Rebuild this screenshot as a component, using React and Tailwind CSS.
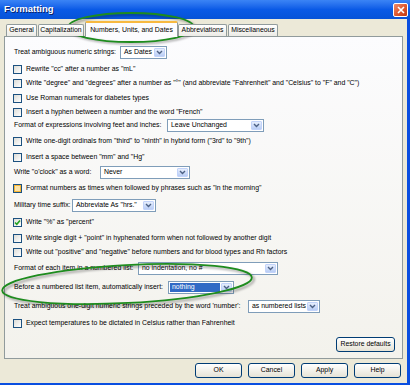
import React from 'react';

// Windows XP style "Formatting" dialog

const rows = [
  { kind: 'select', label: 'Treat ambiguous numeric strings:', lw: 'w-[106px]', value: 'As Dates', sw: 'w-[47px]', mt: 'mt-[9px]' },
  { kind: 'check', label: 'Rewrite "cc" after a number as "mL"', mt: 'mt-[5px]' },
  { kind: 'check', label: 'Write "degree" and "degrees" after a number as "°" (and abbreviate "Fahrenheit" and "Celsius" to "F" and "C")', mt: 'mt-[2px]' },
  { kind: 'check', label: 'Use Roman numerals for diabetes types', mt: 'mt-[3px]' },
  { kind: 'check', label: 'Insert a hyphen between a number and the word "French"', mt: 'mt-[2px]' },
  { kind: 'select', label: 'Format of expressions involving feet and inches:', lw: 'w-[153px]', value: 'Leave Unchanged', sw: 'w-[97px]', mt: 'mt-[1px]' },
  { kind: 'check', label: 'Write one-digit ordinals from "third" to "ninth" in hybrid form ("3rd" to "9th")', mt: 'mt-[4px]' },
  { kind: 'check', label: 'Insert a space between "mm" and "Hg"', mt: 'mt-[4px]' },
  { kind: 'select', label: 'Write "o\'clock" as a word:', lw: 'w-[86px]', value: 'Never', sw: 'w-[90px]', mt: 'mt-[3px]' },
  { kind: 'check', label: 'Format numbers as times when followed by phrases such as "in the morning"', hover: true, mt: 'mt-[4px]' },
  { kind: 'select', label: 'Military time suffix:', lw: 'w-[58px]', value: 'Abbreviate As "hrs."', sw: 'w-[84px]', mt: 'mt-[5px]' },
  { kind: 'check', label: 'Write "%" as "percent"', checked: true, mt: 'mt-[5px]' },
  { kind: 'check', label: 'Write single digit + "point" in hyphenated form when not followed by another digit', mt: 'mt-[4px]' },
  { kind: 'check', label: 'Write out "positive" and "negative" before numbers and for blood types and Rh factors', mt: 'mt-[2px]' },
  { kind: 'select', label: 'Format of each item in a numbered list:', lw: 'w-[124px]', value: 'no indentation, no #', sw: 'w-[140px]', mt: 'mt-[4px]' },
  { kind: 'select', label: 'Before a numbered list item, automatically insert:', lw: 'w-[154px]', value: 'nothing', sw: 'w-[66px]', selected: true, mt: 'mt-[7px]' },
  { kind: 'select', label: "Treat ambiguous one-digit numeric strings preceded by the word 'number':", lw: 'w-[234px]', value: 'as numbered lists', sw: 'w-[72px]', mt: 'mt-[7px]' },
  { kind: 'check', label: 'Expect temperatures to be dictated in Celsius rather than Fahrenheit', mt: 'mt-[5px]' },
];

const tabs = [
  { name: 'General', cls: 'w-[31px] ml-[2px]' },
  { name: 'Capitalization', cls: 'w-[46px] ml-[1px]' },
  { name: 'Numbers, Units, and Dates', cls: 'w-[93px] ml-[1px]', active: true },
  { name: 'Abbreviations', cls: 'w-[49px]' },
  { name: 'Miscellaneous', cls: 'w-[50px] ml-[1px]' },
];

const Chevron = () => (
  <svg width="7" height="5" viewBox="0 0 7 5">
    <path d="M1 1 L3.5 3.5 L6 1" fill="none" stroke="#4d6185" strokeWidth="1.4" />
  </svg>
);

const Select = ({ value, sw, selected }) => (
  <div className={`${sw} h-[13px] shrink-0 bg-white border border-[#7f9db9] flex items-stretch`}>
    <div className={`flex-1 flex items-center pl-[2px] m-[1px] whitespace-nowrap overflow-hidden ${selected ? 'bg-[#316ac5] text-white' : ''}`}>
      {value}
    </div>
    <div className="w-[11px] m-[1px] ml-0 rounded-[1px] bg-linear-to-b from-[#e6eefc] to-[#b9cdf5] border border-[#c2d3fa] flex items-center justify-center">
      <Chevron />
    </div>
  </div>
);

const Box = ({ checked, hover }) => (
  <span
    className={`w-[9px] h-[9px] shrink-0 border border-[#1c5180] flex items-center justify-center ${
      hover ? 'bg-[#fbe3a8] shadow-[inset_0_0_0_1px_#f8b636]' : 'bg-linear-to-br from-[#dcdcd7] to-white'
    }`}
  >
    {checked && (
      <svg width="7" height="7" viewBox="0 0 7 7">
        <path d="M1 3.5 L2.8 5.3 L6 1.5" fill="none" stroke="#21a121" strokeWidth="1.6" />
      </svg>
    )}
  </span>
);

const Row = ({ row }) => {
  if (row.kind === 'select') {
    return (
      <div className={`${row.mt} h-[12px] flex items-center pl-[9px]`}>
        <span className={`${row.lw} shrink-0 whitespace-nowrap`}>{row.label}</span>
        <Select value={row.value} sw={row.sw} selected={row.selected} />
      </div>
    );
  }
  return (
    <div className={`${row.mt} h-[12px] flex items-center pl-[8px] gap-[4px]`}>
      <Box checked={row.checked} hover={row.hover} />
      <span className="whitespace-nowrap">{row.label}</span>
    </div>
  );
};

const XpButton = ({ children, cls }) => (
  <div className={`${cls} h-[15px] rounded-[3px] border border-[#003c74] bg-linear-to-b from-white to-[#e6e3d6] flex items-center justify-center`}>
    {children}
  </div>
);

export default function App() {
  return (
    <div className="w-[410px] h-[385px] relative overflow-hidden bg-[#ece9d8] text-black text-[6.9px] font-['Liberation_Sans',Arial,sans-serif] flex flex-col">
      {/* Title bar */}
      <div className="h-[19px] shrink-0 bg-linear-to-b from-[#3b84f5] via-[#0a5ae6] to-[#0653d8] flex items-center justify-between pl-[4px] pr-[2px]">
        <span className="text-white font-bold text-[9.5px] [text-shadow:1px_1px_0_#0a246a]">Formatting</span>
        <div className="w-[15px] h-[14px] rounded-[2px] border border-white bg-linear-to-br from-[#ec8a6a] via-[#e05a30] to-[#c0380f] flex items-center justify-center">
          <svg width="8" height="8" viewBox="0 0 8 8">
            <path d="M1 1 L7 7 M7 1 L1 7" stroke="white" strokeWidth="1.6" />
          </svg>
        </div>
      </div>

      {/* Body */}
      <div className="flex-1 flex flex-col pl-[4px] pr-[4px] border-r-[3px] border-b-[2px] border-[#0a4ee0]">
        {/* Tabs */}
        <div className="h-[15px] mt-[2px] flex items-end relative z-10">
          {tabs.map((t) =>
            t.active ? (
              <div
                key={t.name}
                className={`${t.cls} h-[16px] -mb-[1px] bg-[#fcfcfe] border-x border-[#919b9c] rounded-t-[2px] border-t-[2px] border-t-[#f7b940] flex items-center justify-center whitespace-nowrap`}
              >
                {t.name}
              </div>
            ) : (
              <div
                key={t.name}
                className={`${t.cls} h-[12px] bg-linear-to-b from-white to-[#ecebe6] border border-b-0 border-[#919b9c] rounded-t-[2px] flex items-center justify-center whitespace-nowrap`}
              >
                {t.name}
              </div>
            )
          )}
        </div>

        {/* Tab panel */}
        <div className="h-[323px] shrink-0 border border-[#919b9c] bg-linear-to-b from-[#fcfcfe] to-[#f3f2ec] flex flex-col">
          {rows.map((r, i) => (
            <Row key={i} row={r} />
          ))}
          <div className="mt-auto mb-[6px] pr-[7px] flex justify-end">
            <XpButton cls="w-[59px]">Restore defaults</XpButton>
          </div>
        </div>

        {/* Dialog buttons */}
        <div className="mt-[4px] flex justify-end gap-[6px] pr-[2px]">
          <XpButton cls="w-[47px]">OK</XpButton>
          <XpButton cls="w-[47px]">Cancel</XpButton>
          <XpButton cls="w-[47px]">Apply</XpButton>
          <XpButton cls="w-[47px]">Help</XpButton>
        </div>
      </div>

      {/* Green annotation ellipses drawn over the dialog */}
      <svg className="absolute inset-0 pointer-events-none" width="410" height="385" viewBox="0 0 410 385">
        <defs>
          <filter id="shadow" x="-10%" y="-50%" width="120%" height="200%">
            <feGaussianBlur stdDeviation="1.2" />
          </filter>
        </defs>
        <ellipse cx="133" cy="29" rx="63" ry="14.5" fill="none" stroke="#000" strokeOpacity="0.35" strokeWidth="2" filter="url(#shadow)" />
        <ellipse cx="131" cy="27.5" rx="63" ry="14.5" fill="none" stroke="#1e8c1e" strokeWidth="1.8" />
        <g transform="rotate(-3 127 284)">
          <ellipse cx="129" cy="286" rx="125" ry="19" fill="none" stroke="#000" strokeOpacity="0.35" strokeWidth="2" filter="url(#shadow)" />
          <ellipse cx="127" cy="284" rx="125" ry="19" fill="none" stroke="#1e8c1e" strokeWidth="1.8" />
        </g>
      </svg>
    </div>
  );
}
